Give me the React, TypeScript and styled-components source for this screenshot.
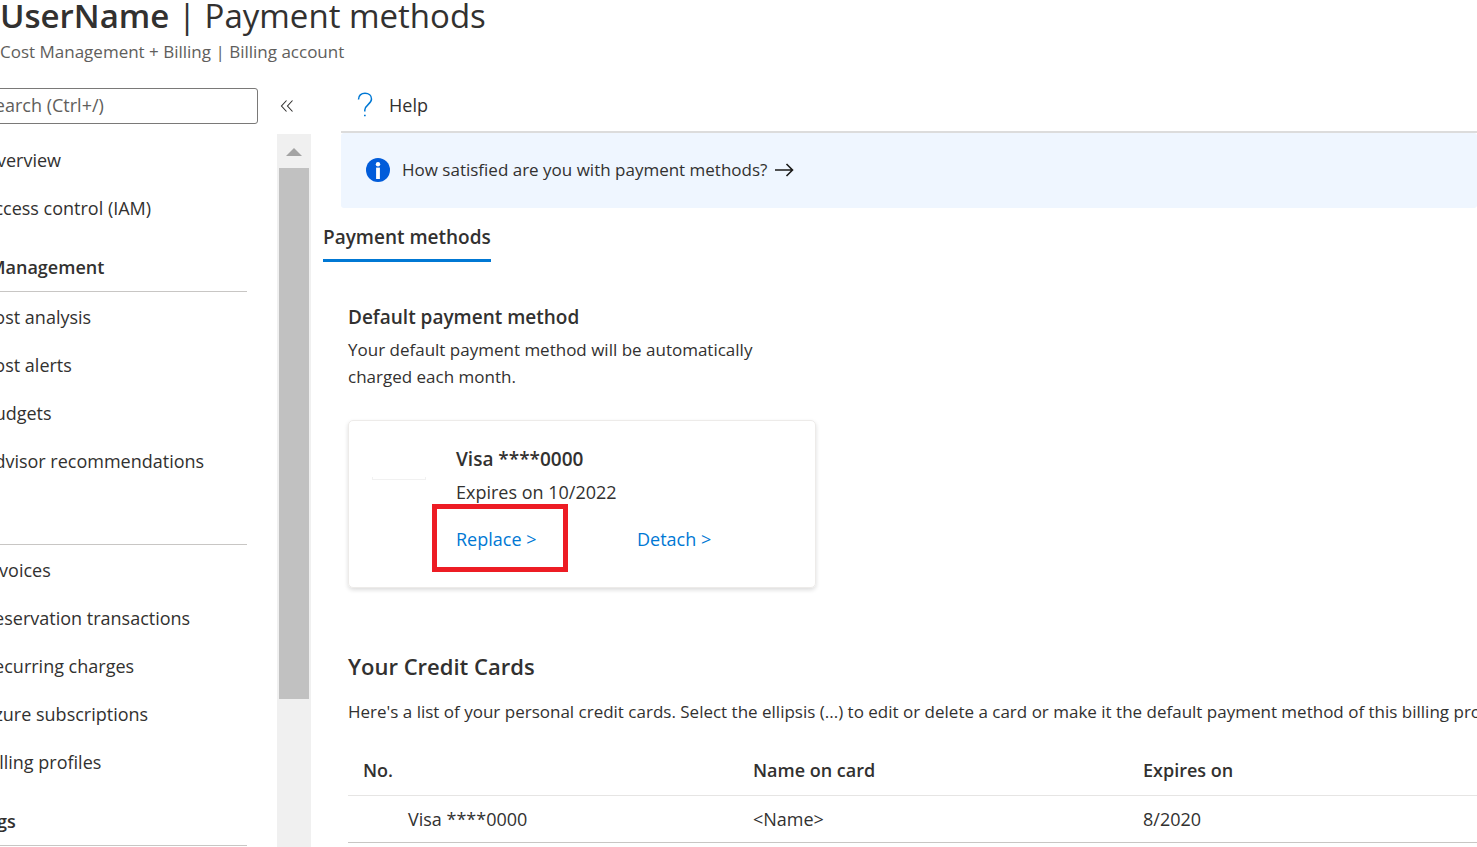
import React from "react";
import styled, { createGlobalStyle } from "styled-components";

const GlobalStyle = createGlobalStyle`
  *, *::before, *::after { box-sizing: border-box; }
  body {
    margin: 0;
    background: #ffffff;
    color: #323130;
    font-family: "Segoe UI", "Open Sans", "Noto Sans", sans-serif;
    font-size: 18px;
    line-height: 24px;
  }
  h1, h2, h3, p, ul { margin: 0; padding: 0; }
`;

const Page = styled.div`
  display: flex;
  flex-direction: column;
  height: 100vh;
  overflow: hidden;
`;

const Header = styled.header`
  flex: none;
  height: 88px;
`;

const Title = styled.h1`
  font-size: 33px;
  line-height: 32px;
  font-weight: 400;
  white-space: nowrap;

  strong { font-weight: 600; }
`;

const Subtitle = styled.p`
  padding-top: 8px;
  font-size: 17px;
  color: #605e5c;
`;

const Body = styled.div`
  display: flex;
  flex: 1;
  min-height: 0;
`;

const Sidebar = styled.aside`
  display: flex;
  flex-direction: column;
  flex: none;
  width: 371px;
  margin-left: -60px;
`;

const SearchRow = styled.div`
  display: flex;
  align-items: center;
  flex: none;
  height: 36px;
  margin-bottom: 10px;
`;

const SearchInput = styled.input`
  width: 318px;
  height: 36px;
  padding: 0 0 2px 44px;
  border: 1px solid #7a7978;
  border-radius: 3px;
  background: #ffffff;
  color: #323130;
  font: inherit;

  &::placeholder { color: #605e5c; opacity: 1; }
`;

const CollapseButton = styled.button`
  display: flex;
  margin-left: 22px;
  padding: 0;
  border: 0;
  background: none;
`;

const ScrollArea = styled.div`
  display: flex;
  flex: 1;
  min-height: 0;
`;

const Nav = styled.nav`
  flex: 1;
  padding: 1px 30px 0 0;
  overflow: hidden;
`;

const NavList = styled.ul`
  list-style: none;
`;

const NavLink = styled.a`
  display: block;
  height: 48px;
  padding-left: 43px;
  line-height: 50px;
  color: #323130;
  text-decoration: none;
  white-space: nowrap;
`;

const NavHeading = styled.h2`
  height: 61px;
  padding: 24px 0 0 6px;
  border-bottom: 1px solid #c8c6c4;
  font-size: 18px;
  line-height: 24px;
  font-weight: 600;
  white-space: nowrap;
`;

const ScrollTrack = styled.div`
  display: flex;
  flex-direction: column;
  flex: none;
  width: 34px;
  padding: 0 2px;
  background: #f0f0f0;
`;

const ScrollArrow = styled.svg`
  display: block;
  flex: none;
  width: 30px;
  height: 34px;
`;

const ScrollThumb = styled.div`
  flex: 18;
  background: #c1c1c1;
`;

const ScrollRemainder = styled.div`
  flex: 5;
`;

const Main = styled.main`
  flex: 1;
  min-width: 0;
  overflow: hidden;
  padding-left: 12px;
`;

const CommandBar = styled.div`
  display: flex;
  align-items: center;
  height: 45px;
  margin-left: 18px;
  padding: 0 0 10px 16px;
  border-bottom: 2px solid #dcdcdc;
`;

const CommandButton = styled.button`
  display: flex;
  align-items: center;
  gap: 16px;
  padding: 0;
  border: 0;
  background: none;
  color: #323130;
  font: inherit;
`;

const Banner = styled.a`
  display: flex;
  align-items: center;
  height: 75px;
  margin-left: 18px;
  padding: 0 0 1px 25px;
  border-radius: 3px;
  background: #eff6ff;
  color: #323130;
  font-size: 17px;
  text-decoration: none;

  svg:first-child { margin-right: 12px; }
  svg:last-child { margin-left: 8px; }
`;

const Tabs = styled.div`
  display: flex;
  padding-top: 15px;
`;

const Tab = styled.button`
  height: 39px;
  padding: 0 0 8px;
  border: 0;
  border-bottom: 3px solid #0078d4;
  background: none;
  color: #323130;
  font: inherit;
  font-size: 19px;
  font-weight: 600;
`;

const Content = styled.section`
  padding: 42px 0 0 25px;
`;

const SectionTitle = styled.h2<{ $large?: boolean }>`
  font-size: ${(p) => (p.$large ? 22 : 19)}px;
  line-height: 26px;
  font-weight: 600;
`;

const Description = styled.p`
  width: 440px;
  padding-top: 6px;
  font-size: 17px;
  line-height: 27px;
`;

const Card = styled.article`
  display: flex;
  width: 468px;
  height: 168px;
  margin: 30px 0 65px;
  padding: 24px 23px;
  border: 1px solid #edebe9;
  border-radius: 5px;
  box-shadow: 0 2px 4px rgba(0, 0, 0, 0.14);
`;

const CardLogo = styled.div`
  width: 54px;
  height: 3px;
  margin: 32px 30px 0 0;
  border: 1px solid #f1f1f1;
  border-top: 0;
`;

const CardDetails = styled.div`
  flex: 1;
`;

const CardNumber = styled.h3`
  font-size: 19px;
  line-height: 28px;
  font-weight: 600;
`;

const Expiry = styled.p`
  padding-top: 7px;
`;

const CardActions = styled.div`
  display: grid;
  grid-template-columns: 181px auto;
  justify-content: start;
  padding-top: 23px;
`;

const ActionLink = styled.a`
  position: relative;
  justify-self: start;
  color: #0078d4;
  text-decoration: none;
`;

const Highlight = styled.span`
  position: absolute;
  top: -23px;
  left: -24px;
  width: 136px;
  height: 68px;
  border: 5px solid #ed1c24;
  pointer-events: none;
`;

const ListIntro = styled.p`
  padding: 21px 0 20px;
  font-size: 17px;
  white-space: nowrap;
`;

const CardTable = styled.table`
  width: 100%;
  min-width: 1170px;
  table-layout: fixed;
  border-collapse: separate;
  border-spacing: 0;
  text-align: left;

  th {
    height: 52px;
    padding: 0 15px;
    border-bottom: 1px solid #e6e5e4;
    font-weight: 600;
  }
  td {
    height: 47px;
    padding: 0 15px;
    border-bottom: 1px solid #c8c6c4;
  }
  td:first-child { padding-left: 60px; }
`;

const groups = [
  { title: "", items: ["Overview", "Access control (IAM)"] },
  {
    title: "Cost Management",
    items: ["Cost analysis", "Cost alerts", "Budgets", "Advisor recommendations"],
  },
  {
    title: "Billing",
    items: [
      "Invoices",
      "Reservation transactions",
      "Recurring charges",
      "Azure subscriptions",
      "Billing profiles",
    ],
  },
  { title: "Settings", items: [] },
];

const cards = [{ number: "Visa ****0000", name: "<Name>", expires: "8/2020" }];

const ChevronsIcon = () => (
  <svg width="14" height="14" viewBox="0 0 14 14" fill="none" stroke="#323130" strokeWidth="1.1">
    <path d="M6.5 1.5 1.5 7l5 5.5M12.5 1.5 7.5 7l5 5.5" />
  </svg>
);

const HelpIcon = () => (
  <svg width="16" height="26" viewBox="0 0 16 26" fill="none" stroke="#0078d4" strokeWidth="1.5">
    <path d="M1.500 7.500C1.500 3.500 4.200 1.300 8 1.300s6.500 2.400 6.500 5.700c0 5.200-6.700 6-6.700 11v1.600" />
    <path d="M7 23.500h1.700" strokeWidth="1.700" />
  </svg>
);

const InfoIcon = () => (
  <svg width="24" height="24" viewBox="0 0 24 24">
    <circle cx="12" cy="12" r="12" fill="#015cda" />
    <circle cx="12" cy="6.200" r="2.200" fill="#ffffff" />
    <path d="M10.100 9.600h3.800V21h-3.800z" fill="#ffffff" />
  </svg>
);

const ArrowIcon = () => (
  <svg width="19" height="14" viewBox="0 0 19 14" fill="none" stroke="#1b1a19" strokeWidth="1.600">
    <path d="M0 7h17.500M11.500 1l6 6-6 6" />
  </svg>
);

export default function App() {
  return (
    <Page>
      <GlobalStyle />
      <Header>
        <Title>
          <strong>UserName</strong> | Payment methods
        </Title>
        <Subtitle>Cost Management + Billing | Billing account</Subtitle>
      </Header>
      <Body>
        <Sidebar>
          <SearchRow>
            <SearchInput type="search" aria-label="Search" placeholder="Search (Ctrl+/)" />
            <CollapseButton type="button" aria-label="Collapse menu">
              <ChevronsIcon />
            </CollapseButton>
          </SearchRow>
          <ScrollArea>
            <Nav>
              {groups.map((group) => (
                <React.Fragment key={group.title}>
                  {group.title && <NavHeading>{group.title}</NavHeading>}
                  <NavList>
                    {group.items.map((item) => (
                      <li key={item}>
                        <NavLink href="#">{item}</NavLink>
                      </li>
                    ))}
                  </NavList>
                </React.Fragment>
              ))}
            </Nav>
            <ScrollTrack aria-hidden="true">
              <ScrollArrow viewBox="0 0 30 34">
                <path d="M15 14l8 8H7z" fill="#a3a3a3" />
              </ScrollArrow>
              <ScrollThumb />
              <ScrollRemainder />
            </ScrollTrack>
          </ScrollArea>
        </Sidebar>
        <Main>
          <CommandBar>
            <CommandButton type="button">
              <HelpIcon />
              Help
            </CommandButton>
          </CommandBar>
          <Banner href="#">
            <InfoIcon />
            How satisfied are you with payment methods?
            <ArrowIcon />
          </Banner>
          <Tabs role="tablist">
            <Tab type="button" role="tab" aria-selected="true">
              Payment methods
            </Tab>
          </Tabs>
          <Content>
            <SectionTitle>Default payment method</SectionTitle>
            <Description>
              Your default payment method will be automatically charged each month.
            </Description>
            <Card>
              <CardLogo />
              <CardDetails>
                <CardNumber>Visa ****0000</CardNumber>
                <Expiry>Expires on 10/2022</Expiry>
                <CardActions>
                  <ActionLink href="#">
                    Replace &gt;
                    <Highlight />
                  </ActionLink>
                  <ActionLink href="#">Detach &gt;</ActionLink>
                </CardActions>
              </CardDetails>
            </Card>
            <SectionTitle $large>Your Credit Cards</SectionTitle>
            <ListIntro>
              Here's a list of your personal credit cards. Select the ellipsis (...) to edit or
              delete a card or make it the default payment method of this billing profile.
            </ListIntro>
            <CardTable>
              <thead>
                <tr>
                  <th scope="col">No.</th>
                  <th scope="col">Name on card</th>
                  <th scope="col">Expires on</th>
                </tr>
              </thead>
              <tbody>
                {cards.map((card) => (
                  <tr key={card.number}>
                    <td>{card.number}</td>
                    <td>{card.name}</td>
                    <td>{card.expires}</td>
                  </tr>
                ))}
              </tbody>
            </CardTable>
          </Content>
        </Main>
      </Body>
    </Page>
  );
}
